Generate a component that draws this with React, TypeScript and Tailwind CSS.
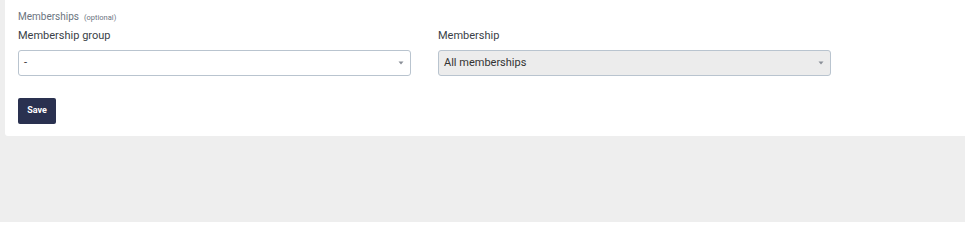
import React from "react";

const Caret = () => (
  <svg width="6" height="4" viewBox="0 0 6 4" className="shrink-0">
    <path d="M0.5 0.5 L5.5 0.5 L3 3.5 Z" fill="#8a8f98" />
  </svg>
);

const Select = ({ value, disabled }: { value: string; disabled?: boolean }) => {
  return (
    <div
      className={`h-[26px] w-[393px] flex items-center justify-between pl-[5px] pr-[6px] border border-[#b9c4cf] rounded-[3px] text-[11px] text-[#333] ${
        disabled ? "bg-[#ececec]" : "bg-white"
      }`}
    >
      <span>{value}</span>
      <Caret />
    </div>
  );
};

const App = () => {
  return (
    <div
      className="w-[965px] h-[222px] bg-[#eeeeee] pl-[5px]"
      style={{ fontFamily: "Roboto, 'Liberation Sans', sans-serif" }}
    >
      <div className="bg-white h-[136px] rounded-bl-[3px] pl-[13px] pt-[9px]">
        <div className="flex items-baseline gap-[5px] h-[14px]">
          <span className="text-[10px] text-[#6b7480]">Memberships</span>
          <span className="text-[7.5px] text-[#6b7480]">(optional)</span>
        </div>
        <div className="flex gap-[27px] mt-[5px]">
          <div className="flex flex-col">
            <label className="text-[11px] text-[#3a3f47] h-[14px] leading-[14px] mt-[1px]">
              Membership group
            </label>
            <div className="mt-[7px]">
              <Select value="-" />
            </div>
          </div>
          <div className="flex flex-col">
            <label className="text-[11px] text-[#3a3f47] h-[14px] leading-[14px] mt-[1px]">
              Membership
            </label>
            <div className="mt-[7px]">
              <Select value="All memberships" disabled />
            </div>
          </div>
        </div>
        <button className="mt-[22px] h-[26px] w-[38px] rounded-[2px] bg-[#2a3150] text-white text-[9px] font-bold">
          Save
        </button>
      </div>
    </div>
  );
};

export default App;
